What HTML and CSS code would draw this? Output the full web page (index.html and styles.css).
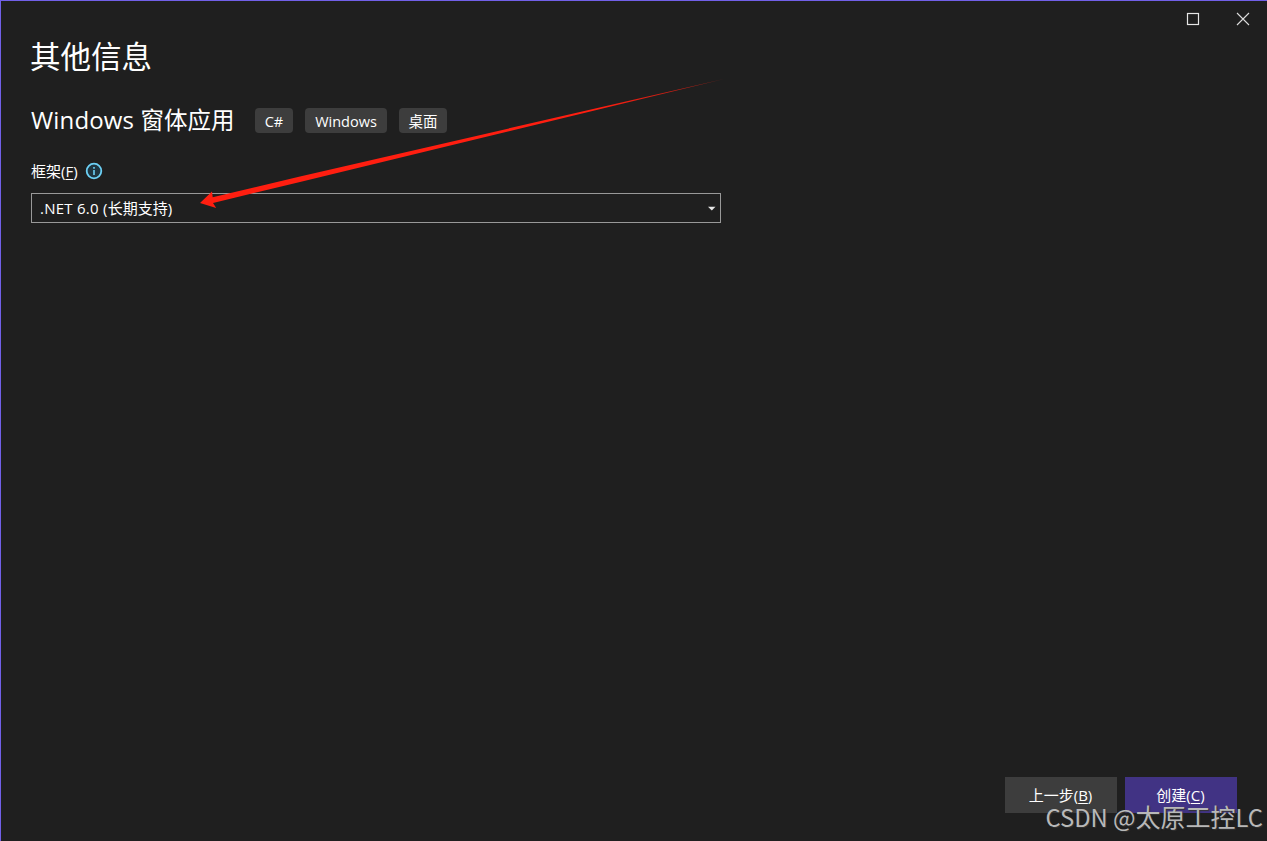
FILE: index.html
```html
<!DOCTYPE html>
<html lang="zh-CN">
<head>
    <meta charset="UTF-8">
    <meta name="viewport" content="width=device-width, initial-scale=1.0">
    <title>其他信息</title>
    <link rel="stylesheet" href="styles.css">
</head>
<body>
    <div class="window">
        <div class="title-bar">
            <svg class="window-icon" width="14" height="14" viewBox="0 0 14 14">
                <rect x="1.5" y="1.5" width="11" height="11" fill="none" stroke="#e6e6e6" stroke-width="1.2"/>
            </svg>
            <svg class="window-icon" width="14" height="14" viewBox="0 0 14 14">
                <path d="M1 1L13 13M13 1L1 13" fill="none" stroke="#dcdcdc" stroke-width="1.1"/>
            </svg>
        </div>
        <main class="content">
            <h1>其他信息</h1>
            <div class="template">
                <h2><span class="latin">Windows</span> <span class="han">窗体应用</span></h2>
                <div class="tags">
                    <span class="tag tag-lang">C#</span>
                    <span class="tag tag-platform">Windows</span>
                    <span class="tag tag-type">桌面</span>
                </div>
            </div>
            <div class="field-label">
                <span>框架(<u>F</u>)</span>
                <svg class="info" width="18" height="18" viewBox="0 0 18 18">
                    <circle cx="9" cy="9" r="7.3" fill="#1f3540" stroke="#6cd0f5" stroke-width="1.8"/>
                    <path d="M9 8V13M9 5V6.7" stroke="#6cd0f5" stroke-width="1.6"/>
                </svg>
            </div>
            <div class="select">
                <span class="select-value"><span class="version">.NET 6.0 (</span>长期支持)</span>
                <svg width="8" height="5" viewBox="0 0 8 5">
                    <path d="M0 0.7H7.5L3.8 4.6Z" fill="#e6e6e6"/>
                </svg>
            </div>
        </main>
        <footer class="actions">
            <button class="btn">上一步(<u>B</u>)</button>
            <button class="btn btn-primary">创建(<u>C</u>)</button>
        </footer>
    </div>

    <svg class="arrow" width="540" height="150" viewBox="190 70 540 150">
        <defs>
            <linearGradient id="fade" gradientUnits="userSpaceOnUse" x1="600" y1="0" x2="722" y2="0">
                <stop offset="0" stop-color="#ff1e10"/>
                <stop offset="1" stop-color="#ff1e10" stop-opacity="0.6"/>
            </linearGradient>
        </defs>
        <path d="M200 203L212 191.5L212.7 197.3L300 176.4L724 79L300 182L213 203L216.2 208Z" fill="url(#fade)"/>
    </svg>
    <div class="watermark">CSDN @<span class="mark-han">太原工控</span>LC</div>
</body>
</html>
```

FILE: styles.css
```css
* {
    box-sizing: border-box;
}
body {
    margin: 0;
    background: #1f1f1f;
    color: #fff;
    font-family: "Open Sans", "Noto Sans CJK SC", sans-serif;
    font-size: 15px;
}
.window {
    height: 841px;
    display: flex;
    flex-direction: column;
    border-top: 1px solid #7160e8;
    border-left: 1px solid #7160e8;
    overflow: hidden;
}
.title-bar {
    height: 36px;
    display: flex;
    align-items: center;
    justify-content: flex-end;
    gap: 36px;
    padding-right: 17px;
}
.window-icon {
    display: block;
}
.content {
    flex: 1;
    padding: 0 30px;
}
h1 {
    margin: 0 0 0 -1px;
    height: 39px;
    line-height: 38px;
    font-size: 30.5px;
    font-weight: 400;
}
.template {
    height: 36px;
    margin-top: 26px;
    display: flex;
    align-items: center;
}
h2 {
    width: 224px;
    margin: 0;
    line-height: 36px;
    font-size: 24px;
    font-weight: 400;
    white-space: nowrap;
}
.latin {
    letter-spacing: 0.15px;
}
.han {
    font-size: 23.5px;
}
.tags {
    display: flex;
    gap: 12px;
}
.tag {
    height: 25px;
    line-height: 27px;
    border-radius: 4px;
    background: #3d3d3d;
    text-align: center;
    font-size: 14.5px;
}
.tag-lang {
    width: 38px;
}
.tag-platform {
    width: 82px;
}
.tag-type {
    width: 48px;
}
.field-label {
    height: 24px;
    margin-top: 21px;
    display: flex;
    align-items: center;
    gap: 7px;
    line-height: 24px;
}
u {
    text-underline-offset: 2px;
}
.info {
    display: block;
}
.select {
    width: 690px;
    height: 30px;
    margin-top: 10px;
    padding: 0 4px 0 8px;
    display: flex;
    align-items: center;
    justify-content: space-between;
    border: 1px solid #999;
    line-height: 28px;
}
.version {
    letter-spacing: 0.25px;
}
.actions {
    display: flex;
    justify-content: flex-end;
    gap: 8px;
    padding: 0 30px 28px 0;
}
.btn {
    width: 112px;
    height: 36px;
    padding: 0 1px 2px 0;
    border: none;
    background: #3d3d3d;
    color: #fff;
    font: inherit;
}
.btn-primary {
    background: #413384;
}
.arrow {
    position: absolute;
    left: 190px;
    top: 70px;
}
.watermark {
    position: absolute;
    right: 4px;
    bottom: 6px;
    color: #b8b8b8;
    font-family: "Noto Sans CJK SC", sans-serif;
    font-size: 23.8px;
    line-height: 36px;
    white-space: nowrap;
    text-shadow: 1px 1px 1px #333;
}
.mark-han {
    font-size: 25px;
}
```
